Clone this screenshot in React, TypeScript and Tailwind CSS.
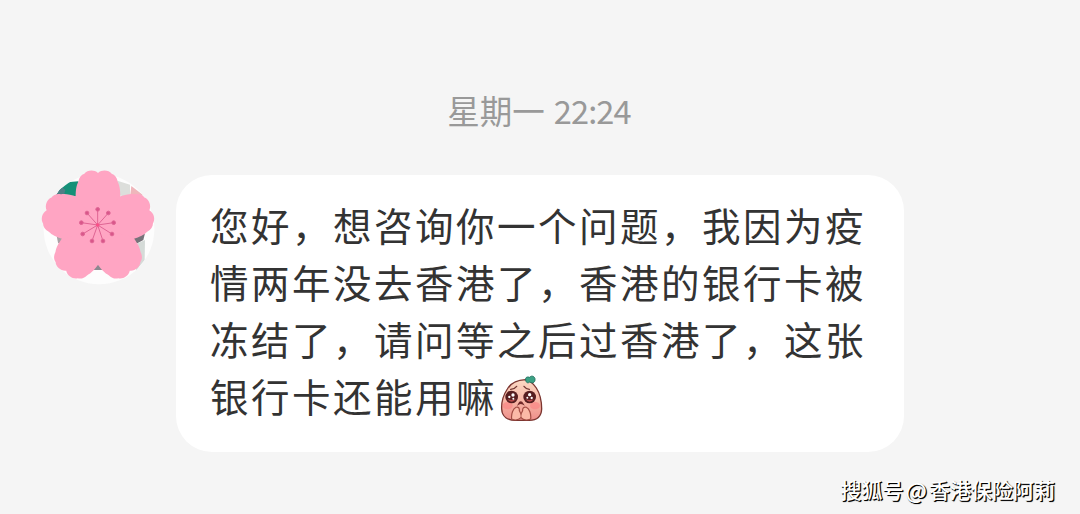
const lines = [
  '您好，想咨询你一个问题，我因为疫',
  '情两年没去香港了，香港的银行卡被',
  '冻结了，请问等之后过香港了，这张',
]

const petals = [0, 72, 144, 216, 288]

const stamens = [
  [203, 148],
  [235, 159],
  [251, 188],
  [246, 222],
  [219, 243],
  [186, 243],
  [158, 222],
  [154, 188],
  [171, 159],
]

function Avatar() {
  return (
    <svg className="h-[135px] w-[140px] shrink-0" viewBox="0 0 420 405">
      <defs>
        <clipPath id="avatar">
          <circle cx="207" cy="207" r="166" />
        </clipPath>
      </defs>
      <g clipPath="url(#avatar)">
        <rect width="420" height="405" fill="#fdfdfd" />
        <path d="M78 115 L95 68 L145 64 L150 108 Z" fill="#159078" />
        <path d="M76 108 L95 80 L106 90 L100 112 Z" fill="#4f7f86" />
        <path d="M255 60 L300 74 L300 112 L260 105 Z" fill="#dcdedb" />
        <path d="M304 78 L340 106 L300 112 Z" fill="#efb6bb" />
        <path d="M79 222 H100 V262 L84 248 Z" fill="#aaa0a5" />
        <path d="M305 230 L345 220 L340 240 L318 252 Z" fill="#77737a" />
        <path d="M318 252 L345 240 L344 300 L318 332 Z" fill="#d5dbd8" />
        <path d="M185 330 L203 305 L222 330 Z" fill="#8c8990" />
      </g>
      {/* Cherry blossom */}
      <g fill="#ffa5c3">
        <circle cx="204" cy="201" r="112" />
        {petals.map((angle) => (
          <path
            key={angle}
            transform={`translate(204 201) rotate(${angle})`}
            d="M0 0 L-67 -88 C-67 -112 -65 -124 -59 -136 C-57 -149 -50 -157 -41 -160 C-32 -171 -12 -173 0 -162 C12 -173 32 -171 41 -160 C50 -157 57 -149 59 -136 C65 -124 67 -112 67 -88 Z"
          />
        ))}
      </g>
      <g stroke="#df6594" strokeWidth="3" fill="#d9568a">
        {stamens.map(([x, y]) => (
          <g key={`${x}-${y}`}>
            <line x1="203" y1="195" x2={x} y2={y} />
            <circle cx={x} cy={y} r="5.5" />
          </g>
        ))}
        <circle cx="203" cy="195" r="4" fill="#fb4f88" stroke="#fb4f88" />
      </g>
    </svg>
  )
}

function PeachEmoji() {
  return (
    <svg className="ml-[3px] mt-[6px] h-[47px] w-[43px]" viewBox="32 32 129 141">
      <defs>
        <linearGradient id="peach" x1="0" y1="0" x2="0" y2="1">
          <stop offset="0" stopColor="#fbd9c4" />
          <stop offset="0.55" stopColor="#f7b3a3" />
          <stop offset="1" stopColor="#ee8f8b" />
        </linearGradient>
      </defs>
      <path
        d="M108 46 C86 47 66 54 54 74 C42 92 36 112 37 134 C38 158 56 168 78 168 H120 C144 168 156 155 157 134 C157 108 152 88 141 71 C132 57 121 49 108 46 Z"
        fill="url(#peach)"
        stroke="#7b3530"
        strokeWidth="4"
      />
      <ellipse cx="55" cy="124" rx="15" ry="11" fill="#f98887" opacity="0.75" />
      <ellipse cx="137" cy="124" rx="15" ry="11" fill="#f98887" opacity="0.75" />
      {/* Leaf */}
      <path
        d="M110 51 C106 40 112 36 121 39 C126 32 138 36 137 46 C137 55 129 58 121 53 C117 57 112 56 110 51 Z"
        fill="#3ba184"
        stroke="#257563"
        strokeWidth="3"
      />
      {/* Brows */}
      <path d="M64 75 Q76 74 82 66 M104 66 Q110 74 120 75" fill="none" stroke="#713632" strokeWidth="4" strokeLinecap="round" />
      {/* Eyes */}
      <circle cx="67" cy="98" r="19" fill="#561e20" />
      <circle cx="121" cy="98" r="19" fill="#561e20" />
      <path d="M54 104 Q67 120 80 104 Q67 110 54 104 Z M108 104 Q121 120 134 104 Q121 110 108 104 Z" fill="#b84b4b" />
      <g fill="#fff">
        <circle cx="71" cy="92" r="5" />
        <circle cx="60" cy="98" r="3.5" />
        <circle cx="72" cy="103" r="3" />
        <circle cx="121" cy="91" r="5" />
        <circle cx="114" cy="100" r="3" />
        <circle cx="127" cy="101" r="3.5" />
      </g>
      <path d="M88 119 Q94 107 101 119 Q94 115 88 119 Z" fill="#8b3030" stroke="#6f2828" strokeWidth="4" />
      {/* Hands */}
      <path
        d="M67 164 C65 149 71 133 80 129 C87 126 91 132 90 139 L95 149 L100 139 C99 132 104 126 111 129 C120 133 126 149 124 164 C114 168 102 168 95 160 C87 168 76 168 67 164 Z"
        fill="#fbb9a7"
        stroke="#a24c43"
        strokeWidth="3.5"
      />
      <path d="M95 149 V161" stroke="#a24c43" strokeWidth="2.5" />
    </svg>
  )
}

export default function App() {
  return (
    <div className="flex h-[514px] w-[1080px] flex-col overflow-hidden bg-[#f5f5f5] font-['Noto_Sans_CJK_SC',sans-serif]">
      <div className="mt-[86px] flex h-12 items-center justify-center gap-[9px] pr-[2px] text-[32.5px] leading-[48px] text-[#999999]">
        <span>星期一</span>
        <span className="tracking-[-0.8px]">22:24</span>
      </div>

      <div className="mt-[26px] flex items-start pl-[30px]">
        <Avatar />
        <div className="ml-1.5 mt-[15px] h-[277px] w-[728px] rounded-[36px] bg-white pl-[34px] pt-[21px] text-[38.5px] leading-[57px] tracking-[2.5px] text-[#333333]">
          {lines.map((line) => (
            <p key={line} className="whitespace-nowrap">{line}</p>
          ))}
          <p className="flex h-[57px] items-center whitespace-nowrap">
            银行卡还能用嘛
            <PeachEmoji />
          </p>
        </div>
      </div>

      {/* Watermark */}
      <div className="mt-[21px] flex justify-end pr-[25px] text-[21px] leading-8 font-medium text-white [text-shadow:1px_1px_0_#000,1px_1px_1px_#000]">
        <span>搜狐号</span>
        <span className="px-[2px] text-[22px]">@</span>
        <span>香港保险阿莉</span>
      </div>
    </div>
  )
}
